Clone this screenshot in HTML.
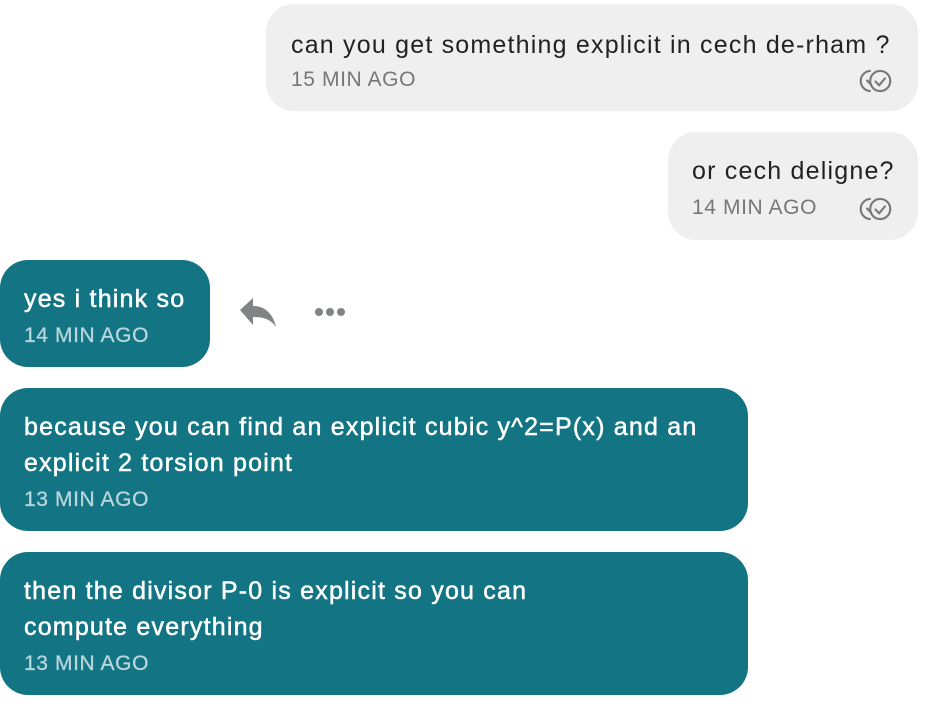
<!DOCTYPE html>
<html><head><style>
body{margin:0;width:930px;height:710px;background:#fff;position:relative;overflow:hidden;font-family:"Liberation Sans",sans-serif}
.b{position:absolute;border-radius:28px}
.g{background:#efefef;color:#222}
.t{background:#137584;color:#fff}
.x{position:absolute;font-size:25px;letter-spacing:1.2px;white-space:nowrap;line-height:36px}
.t .x{-webkit-text-stroke:0.5px #fff}
.m{position:absolute;font-size:21px;letter-spacing:0.6px;white-space:nowrap;line-height:24px}
.g .m{color:#777}
.t .m{color:#b8d6dc;-webkit-text-stroke:0.3px #b8d6dc}
svg.ck{position:absolute}
</style></head><body>
<div class="b g" style="left:266px;top:4px;width:652px;height:107px">
<div class="x" style="left:25px;top:23px">can you get something explicit in cech de-rham ?</div>
<div class="m" style="left:25px;top:64px">15 MIN AGO</div>
<svg class="ck" style="left:591px;top:63px" width="38" height="28" viewBox="0 0 36 26"><path d="M13 3.5a9.5 9.5 0 0 0 0 19" fill="none" stroke="#777" stroke-width="2"/><path d="M9 12l5 5" stroke="#777" stroke-width="2"/><circle cx="22" cy="13" r="9.5" fill="none" stroke="#777" stroke-width="2"/><path d="M17 13l4 4 6-7" fill="none" stroke="#777" stroke-width="2"/></svg>
</div>
<div class="b g" style="left:668px;top:132px;width:250px;height:108px">
<div class="x" style="left:24px;top:21px">or cech deligne?</div>
<div class="m" style="left:24px;top:64px">14 MIN AGO</div>
<svg class="ck" style="left:189px;top:63px" width="38" height="28" viewBox="0 0 36 26"><path d="M13 3.5a9.5 9.5 0 0 0 0 19" fill="none" stroke="#777" stroke-width="2"/><path d="M9 12l5 5" stroke="#777" stroke-width="2"/><circle cx="22" cy="13" r="9.5" fill="none" stroke="#777" stroke-width="2"/><path d="M17 13l4 4 6-7" fill="none" stroke="#777" stroke-width="2"/></svg>
</div>
<div class="b t" style="left:0;top:260px;width:210px;height:107px">
<div class="x" style="left:24px;top:21px">yes i think so</div>
<div class="m" style="left:24px;top:64px">14 MIN AGO</div>
</div>
<svg style="position:absolute;left:239px;top:296px" width="38" height="32" viewBox="0 0 38 32"><path d="M1 14L14 2v8c12 0 20 8 23 21-5-7-11-10-23-10v8z" fill="#808485"/></svg>
<svg style="position:absolute;left:313px;top:306px" width="34" height="12"><circle cx="6" cy="6" r="4" fill="#808485"/><circle cx="17" cy="6" r="4" fill="#808485"/><circle cx="28" cy="6" r="4" fill="#808485"/></svg>
<div class="b t" style="left:0;top:388px;width:748px;height:143px">
<div class="x" style="left:24px;top:21px">because you can find an explicit cubic y^2=P(x) and an</div>
<div class="x" style="left:24px;top:57px">explicit 2 torsion point</div>
<div class="m" style="left:24px;top:100px">13 MIN AGO</div>
</div>
<div class="b t" style="left:0;top:552px;width:748px;height:143px">
<div class="x" style="left:24px;top:21px">then the divisor P-0 is explicit so you can</div>
<div class="x" style="left:24px;top:57px">compute everything</div>
<div class="m" style="left:24px;top:100px">13 MIN AGO</div>
</div>
</body></html>
